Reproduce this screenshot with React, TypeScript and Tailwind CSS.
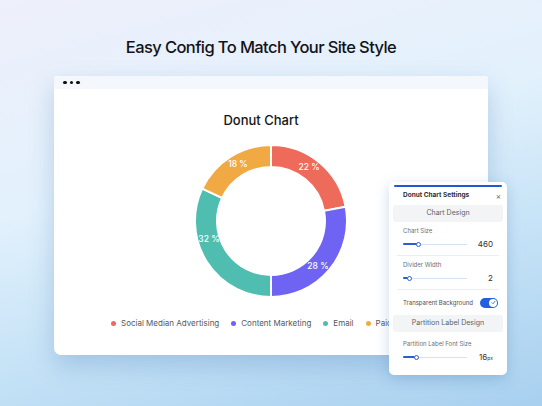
import React from 'react';

const CX = 78;
const CY = 78;
const R_OUT = 76;
const R_IN = 54;

const segments = [
  { value: 22, color: '#ee6a5a' },
  { value: 28, color: '#6f63f4' },
  { value: 32, color: '#4fbdb0' },
  { value: 18, color: '#f1aa43' },
];

// label centres, relative to the donut box
const labels = [
  { text: '22 %', x: 116, y: 24 },
  { text: '28 %', x: 125, y: 123 },
  { text: '32 %', x: 16, y: 96 },
  { text: '18 %', x: 45, y: 21 },
];

function point(r: number, deg: number) {
  const a = ((deg - 90) * Math.PI) / 180;
  return [CX + r * Math.cos(a), CY + r * Math.sin(a)];
}

function arcPath(start: number, end: number) {
  const large = end - start > 180 ? 1 : 0;
  const [x1, y1] = point(R_OUT, start);
  const [x2, y2] = point(R_OUT, end);
  const [x3, y3] = point(R_IN, end);
  const [x4, y4] = point(R_IN, start);
  return `M${x1} ${y1} A${R_OUT} ${R_OUT} 0 ${large} 1 ${x2} ${y2} L${x3} ${y3} A${R_IN} ${R_IN} 0 ${large} 0 ${x4} ${y4} Z`;
}

function Donut() {
  let acc = 0;
  return (
    <div className="relative h-[156px] w-[156px]">
      <svg width="156" height="156" viewBox="0 0 156 156">
        {segments.map((s, i) => {
          const start = (acc / 100) * 360;
          acc += s.value;
          const end = (acc / 100) * 360;
          return <path key={i} d={arcPath(start, end)} fill={s.color} stroke="#fff" strokeWidth="2" />;
        })}
      </svg>
      {labels.map((l) => (
        <span
          key={l.text}
          className="absolute -translate-x-1/2 -translate-y-1/2 whitespace-nowrap text-[8.5px] font-medium text-white"
          style={{ left: l.x, top: l.y }}
        >
          {l.text}
        </span>
      ))}
    </div>
  );
}

function LegendItem({ color, label }: { color: string; label: string }) {
  return (
    <div className="flex shrink-0 items-center gap-[5px] whitespace-nowrap">
      <span className="h-[5px] w-[5px] rounded-full" style={{ background: color }} />
      <span>{label}</span>
    </div>
  );
}

function Slider({ fill }: { fill: number }) {
  return (
    <div className="relative h-[6px] w-[64px]">
      <div className="absolute left-0 right-0 top-[2.5px] h-[1px] bg-[#d5e2f3]" />
      <div className="absolute left-0 top-[2px] h-[2px] rounded-full bg-[#2b5fd0]" style={{ width: fill }} />
      <div
        className="absolute top-[0.5px] h-[5px] w-[5px] rounded-full border-[1.5px] border-[#2b5fd0] bg-white"
        style={{ left: fill - 1 }}
      />
    </div>
  );
}

function SliderRow({ label, fill, value, top = 5 }: { label: string; fill: number; value: React.ReactNode; top?: number }) {
  return (
    <div className="flex flex-col gap-[4px] px-[14px] pb-[6px]" style={{ paddingTop: top }}>
      <div className="text-[6px] leading-[8px] text-[#6b6f76]">{label}</div>
      <div className="flex h-[10px] items-center justify-between">
        <Slider fill={fill} />
        <div className="text-[8px] leading-[10px] text-[#333]">{value}</div>
      </div>
    </div>
  );
}

function SectionHeader({ title }: { title: string }) {
  return (
    <div className="mx-[4px] flex h-[17px] items-center justify-center rounded-[3px] bg-[#f3f4f6] text-[7px] text-[#5b5f66]">
      {title}
    </div>
  );
}

function SettingsPanel() {
  return (
    <div className="absolute left-[389px] top-[182px] h-[193px] w-[118px] rounded-[5px] bg-white pt-[3px] shadow-[0_4px_14px_rgba(60,110,170,0.25)]">
      <div className="mx-[5px] h-[2px] rounded-full bg-[#1f5ad2]" />
      <div className="flex h-[18px] items-center justify-between pl-[14px] pr-[6px]">
        <span className="text-[6.5px] font-bold text-[#2b2f36]">Donut Chart Settings</span>
        <span className="text-[8px] leading-none text-[#666]">×</span>
      </div>
      <SectionHeader title="Chart Design" />
      <SliderRow label="Chart Size" fill={14} value="460" />
      <div className="mx-[8px] h-px bg-[#eceef1]" />
      <SliderRow label="Divider Width" fill={5} value="2" />
      <div className="mx-[8px] h-px bg-[#eceef1]" />
      <div className="flex h-[25px] items-center justify-between pl-[14px] pr-[9px]">
        <span className="text-[6px] text-[#4b4f56]">Transparent Background</span>
        <div className="flex h-[10px] w-[18px] items-center justify-end rounded-full bg-[#1f5fe0] pr-[1px]">
          <div className="flex h-[8px] w-[8px] items-center justify-center rounded-full bg-white">
            <svg width="5" height="5" viewBox="0 0 10 10">
              <path d="M2 5.5 L4 7.5 L8 2.5" fill="none" stroke="#1f5fe0" strokeWidth="1.6" strokeLinecap="round" />
            </svg>
          </div>
        </div>
      </div>
      <SectionHeader title="Partition Label Design" />
      <SliderRow
        label="Partition Label Font Size"
        fill={12}
        top={8}
        value={
          <span>
            16<span className="text-[5px]">px</span>
          </span>
        }
      />
    </div>
  );
}

export default function App() {
  return (
    <div
      className="relative h-[406px] w-[542px] overflow-hidden bg-[linear-gradient(165deg,#eef0fb_0%,#e2f1fc_40%,#c3e1f6_70%,#a8d0ef_100%)]"
      style={{ fontFamily: 'Inter, "Noto Sans", sans-serif' }}
    >
      <div className="flex h-[76px] items-start justify-center pr-[20px] pt-[36px]">
        <h1 className="text-[16.5px] font-medium leading-[22px] tracking-[-0.6px] text-[#121317]">
          Easy Config To Match Your Site Style
        </h1>
      </div>
      <div className="ml-[54px] w-[434px] overflow-hidden rounded-b-[7px] rounded-t-[3px] bg-white shadow-[0_10px_24px_rgba(70,120,180,0.28)]">
        <div className="flex h-[13px] items-center gap-[3px] bg-[#f4f8fd] pl-[9px]">
          <span className="h-[3.5px] w-[3.5px] rounded-full bg-[#111]" />
          <span className="h-[3.5px] w-[3.5px] rounded-full bg-[#111]" />
          <span className="h-[3.5px] w-[3.5px] rounded-full bg-[#111]" />
        </div>
        <div className="flex h-[266px] flex-col items-center">
          <div className="pr-[20px] pt-[23px] text-[13px] font-medium leading-[16px] text-[#141519]">Donut Chart</div>
          <div className="mt-[15px]">
            <Donut />
          </div>
          {/* the settings panel covers the rest of the legend */}
          <div className="mt-[19px] flex w-[335px] items-center gap-[12px] self-start overflow-hidden pl-[57px] text-[8px] leading-[10px] text-[#55585e]">
            <LegendItem color="#ee6a5a" label="Social Median Advertising" />
            <LegendItem color="#6f63f4" label="Content Marketing" />
            <LegendItem color="#4fbdb0" label="Email" />
            <LegendItem color="#f1aa43" label="Paid Search" />
          </div>
        </div>
      </div>
      <SettingsPanel />
    </div>
  );
}
